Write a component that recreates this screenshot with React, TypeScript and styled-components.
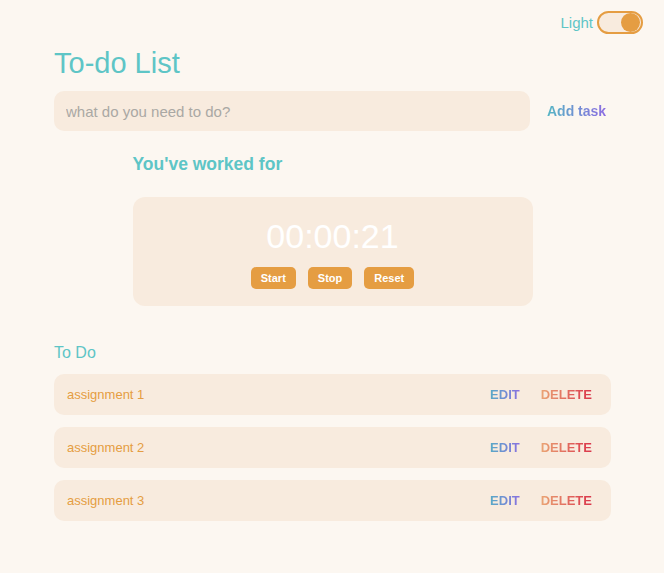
import React from 'react';
import { styled, createGlobalStyle } from 'styled-components';

const GlobalStyle = createGlobalStyle`
  body {
    margin: 0;
    background: #fcf7f1;
    font-family: "Liberation Sans", Arial, sans-serif;
  }
`;

const teal = '#5ec5c6';
const orange = '#e59d42';
const panel = '#f8ebde';

const Page = styled.div`
  min-height: 100vh;
  padding: 11px 21px 0 54px;
  box-sizing: border-box;
`;

const TopBar = styled.div`
  display: flex;
  justify-content: flex-end;
  align-items: center;
  gap: 4px;
`;

const ModeLabel = styled.span`
  color: ${teal};
  font-size: 15px;
`;

const Toggle = styled.div`
  width: 46px;
  height: 23px;
  box-sizing: border-box;
  border: 2px solid ${orange};
  border-radius: 12px;
  background: ${panel};
  display: flex;
  justify-content: flex-end;
  align-items: center;
  padding: 0 1px;
`;

const Knob = styled.div`
  width: 19px;
  height: 19px;
  border-radius: 50%;
  background: ${orange};
`;

const Content = styled.main`
  width: 557px;
`;

const Title = styled.h1`
  margin: 11px 0 0;
  font-size: 29px;
  line-height: 36px;
  font-weight: 400;
  color: ${teal};
`;

const InputRow = styled.div`
  margin-top: 10px;
  display: flex;
  align-items: center;
  gap: 17px;
`;

const TaskInput = styled.input`
  width: 476px;
  height: 40px;
  box-sizing: border-box;
  border: none;
  outline: none;
  border-radius: 10px;
  background: ${panel};
  padding: 0 12px;
  font-family: inherit;
  font-size: 15px;
  color: #555;
  &::placeholder {
    color: #aaa8a4;
  }
`;

const GradientText = styled.span<{ $from: string; $to: string }>`
  font-weight: 700;
  background: linear-gradient(90deg, ${(p) => p.$from}, ${(p) => p.$to});
  -webkit-background-clip: text;
  background-clip: text;
  color: transparent;
  cursor: pointer;
`;

const AddTask = styled(GradientText)`
  font-size: 14px;
`;

const TimerSection = styled.section`
  width: 400px;
  margin: 23px auto 0;
`;

const TimerHeading = styled.h2`
  margin: 0;
  font-size: 17.5px;
  line-height: 20px;
  font-weight: 700;
  color: ${teal};
`;

const TimerBox = styled.div`
  margin-top: 23px;
  height: 109px;
  box-sizing: border-box;
  border-radius: 12px;
  background: ${panel};
  padding-top: 19px;
  display: flex;
  flex-direction: column;
  align-items: center;
`;

const Time = styled.div`
  font-size: 34px;
  line-height: 40px;
  color: #fff;
`;

const Controls = styled.div`
  margin-top: 11px;
  display: flex;
  gap: 12px;
`;

const TimerButton = styled.button`
  height: 22px;
  padding: 0 10px;
  border: none;
  border-radius: 5px;
  background: ${orange};
  color: #fff;
  font-family: inherit;
  font-size: 11px;
  font-weight: 700;
  cursor: pointer;
`;

const ListHeading = styled.h3`
  margin: 37px 0 0;
  font-size: 16px;
  line-height: 20px;
  font-weight: 400;
  color: ${teal};
`;

const List = styled.ul`
  list-style: none;
  margin: 11px 0 0;
  padding: 0;
  display: flex;
  flex-direction: column;
  gap: 12px;
`;

const Row = styled.li`
  height: 41px;
  border-radius: 10px;
  background: ${panel};
  display: flex;
  align-items: center;
  padding: 0 19px 0 13px;
`;

const TaskName = styled.span`
  flex: 1;
  font-size: 13px;
  color: ${orange};
`;

const Actions = styled.div`
  display: flex;
  gap: 21px;
  font-size: 13px;
`;

const tasks = ['assignment 1', 'assignment 2', 'assignment 3'];

export default function App() {
  return (
    <>
      <GlobalStyle />
      <Page>
        <TopBar>
          <ModeLabel>Light</ModeLabel>
          <Toggle>
            <Knob />
          </Toggle>
        </TopBar>
        <Content>
          <Title>To-do List</Title>
          <InputRow>
            <TaskInput placeholder="what do you need to do?" />
            <AddTask $from="#56b6c4" $to="#8c6ce2">Add task</AddTask>
          </InputRow>
          <TimerSection>
            <TimerHeading>You've worked for</TimerHeading>
            <TimerBox>
              <Time>00:00:21</Time>
              <Controls>
                <TimerButton>Start</TimerButton>
                <TimerButton>Stop</TimerButton>
                <TimerButton>Reset</TimerButton>
              </Controls>
            </TimerBox>
          </TimerSection>
          <ListHeading>To Do</ListHeading>
          <List>
            {tasks.map((t) => (
              <Row key={t}>
                <TaskName>{t}</TaskName>
                <Actions>
                  <GradientText $from="#58aac6" $to="#8a70e0">EDIT</GradientText>
                  <GradientText $from="#eaa474" $to="#da344a">DELETE</GradientText>
                </Actions>
              </Row>
            ))}
          </List>
        </Content>
      </Page>
    </>
  );
}
